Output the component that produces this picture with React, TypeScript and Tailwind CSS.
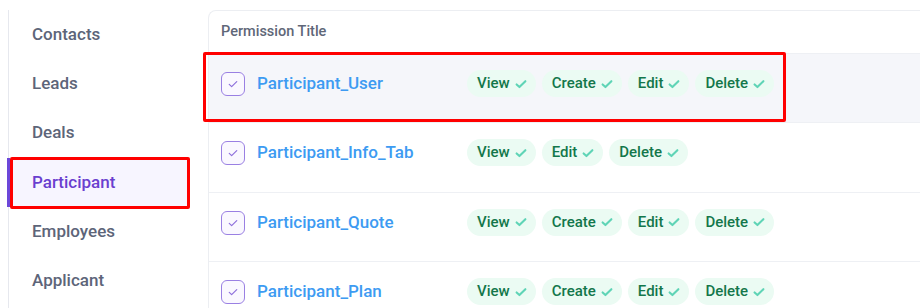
const menu = ["Contacts", "Leads", "Deals", "Participant", "Employees", "Applicant"];

const rows = [
  { title: "Participant_User", perms: ["View", "Create", "Edit", "Delete"] },
  { title: "Participant_Info_Tab", perms: ["View", "Edit", "Delete"] },
  { title: "Participant_Quote", perms: ["View", "Create", "Edit", "Delete"] },
  { title: "Participant_Plan", perms: ["View", "Create", "Edit", "Delete"] },
];

const Check = ({ className, w = 2 }: { className: string; w?: number }) => (
  <svg viewBox="0 0 16 16" fill="none" className={className}>
    <path d="M3 8.5l3.2 3L13 4.8" stroke="currentColor" strokeWidth={w} strokeLinecap="round" strokeLinejoin="round" />
  </svg>
);

function Chip({ label }: { label: string }) {
  return (
    <span className="flex h-[27px] items-center gap-[4px] rounded-full bg-[#ebfbf3] pl-[10px] pr-[8px] text-[15px] font-medium text-[#13774b]">
      {label}
      <Check className="h-[14px] w-[14px] text-[#5fd4b6]" w={2.4} />
    </span>
  );
}

export default function App() {
  return (
    <div className="relative flex h-[308px] w-[920px] overflow-hidden bg-white font-['Roboto',sans-serif]">
      <aside className="w-[208px] shrink-0 pl-2 pt-[10px]">
        <ul className="h-full w-[181px] border-l-[1.5px] border-[#e6e8ee]">
          {menu.map((m) => {
            const active = m === "Participant";
            return (
              <li
                key={m}
                className={
                  active
                    ? "-ml-[2px] flex h-[49.3px] items-center border-l-[3px] border-[#6c47d9] bg-[#f7f5ff] pl-[22px] text-[17px] font-medium text-[#6a3fcf]"
                    : "flex h-[49.3px] items-center pl-[23px] text-[17px] font-medium text-[#5d6579]"
                }
              >
                {m}
              </li>
            );
          })}
        </ul>
      </aside>

      <main className="mt-[10px] flex-1 rounded-tl-lg border-l border-t border-[#eceef2]">
        <div className="flex h-[42px] items-center pl-[12px] text-[14.5px] font-medium text-[#5f6778]">
          Permission Title
        </div>
        {rows.map((r, i) => (
          <div
            key={r.title}
            className={
              i === 0
                ? "flex h-[69px] items-start border-t border-[#eef0f4] bg-[#f5f6fa] pl-[12px] pt-[16px]"
                : "flex h-[69.5px] items-start border-t border-[#eef0f4] pl-[12px] pt-[16px]"
            }
          >
            <div className="flex h-[28px] w-[238px] items-center gap-[12px]">
              <span className="flex h-[24px] w-[24px] items-center justify-center rounded-[6px] border-[1.5px] border-[#9a80e3] bg-[#faf8ff]">
                <Check className="h-[12px] w-[12px] text-[#8e70dc]" w={1.6} />
              </span>
              <span className="text-[17px] font-medium text-[#3d9bf2]">{r.title}</span>
            </div>
            <div className="flex gap-[6px] pl-[8px]">
              {r.perms.map((p) => (
                <Chip key={p} label={p} />
              ))}
            </div>
          </div>
        ))}
      </main>

      <div className="pointer-events-none absolute left-[10px] top-[157px] h-[52px] w-[180px] rounded-[2px] border-[3px] border-[#ff0000]" />
      <div className="pointer-events-none absolute left-[203px] top-[52px] h-[70px] w-[583px] rounded-[2px] border-[3px] border-[#ff0000]" />
    </div>
  );
}
